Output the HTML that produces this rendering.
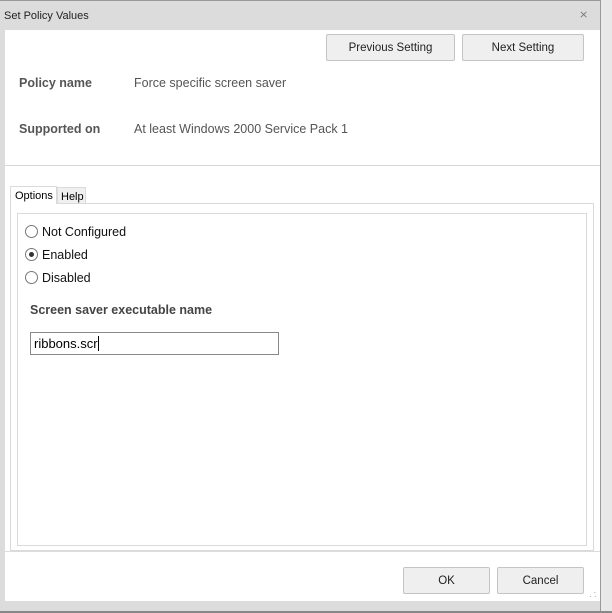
<!DOCTYPE html>
<html><head><style>
*{margin:0;padding:0;box-sizing:border-box}
body{width:612px;height:613px;background:#dcdcdc;font-family:"Liberation Sans",sans-serif;position:relative;overflow:hidden;font-size:12px;color:#000}
.a{position:absolute}
.btn{position:absolute;background:#efefef;border:1px solid #c4c4c4;border-radius:2px;text-align:center;font-size:11.5px;color:#222}
.lbl{font-weight:bold;color:#555;font-size:12.5px}
.val{color:#555;font-size:12.5px}
.rad{position:absolute;width:13px;height:13px;border:1px solid #777;border-radius:50%;background:#fff}
.rt{position:absolute;font-size:12.5px;color:#111}
</style></head><body>
<div class="a" style="left:0;top:0;width:612px;height:1px;background:#999"></div>
<div class="a" style="left:600px;top:0;width:12px;height:613px;background:#e8e8e8;border-left:1px solid #999"></div>
<div class="a" style="left:0;top:611px;width:612px;height:2px;background:#888"></div>
<div class="a" style="left:4px;top:10px;font-size:11px;color:#222">Set Policy Values</div>
<div class="a" style="left:579px;top:8px;font-size:11px;color:#777">⨯</div>
<div class="a" style="left:5px;top:30px;width:595px;height:135px;background:#fff"></div>
<div class="a" style="left:5px;top:165px;width:595px;height:1px;background:#d8d8d8"></div>
<div class="a" style="left:5px;top:166px;width:595px;height:385px;background:#fff"></div>
<div class="a" style="left:5px;top:552px;width:595px;height:49px;background:#fff"></div>
<div class="btn" style="left:326px;top:34px;width:129px;height:27px;line-height:27px">Previous Setting</div>
<div class="btn" style="left:462px;top:34px;width:122px;height:27px;line-height:27px">Next Setting</div>
<div class="a lbl" style="left:19px;top:76px">Policy name</div>
<div class="a val" style="left:134px;top:76px">Force specific screen saver</div>
<div class="a lbl" style="left:19px;top:122px">Supported on</div>
<div class="a val" style="left:134px;top:122px">At least Windows 2000 Service Pack 1</div>
<div class="a" style="left:10px;top:203px;width:584px;height:348px;border:1px solid #dadada"></div>
<div class="a" style="left:10px;top:186px;width:47px;height:18px;background:#fff;border:1px solid #dadada;border-bottom:none;font-size:11px;padding:3px 0 0 4px">Options</div>
<div class="a" style="left:57px;top:187px;width:29px;height:16px;background:#f0f0f0;border:1px solid #dadada;border-bottom:none;font-size:11px;padding:3px 0 0 3px">Help</div>
<div class="a" style="left:17px;top:213px;width:570px;height:333px;border:1px solid #dadada"></div>
<div class="rad" style="left:25px;top:225px"></div><div class="rt" style="left:42px;top:225px">Not Configured</div>
<div class="rad" style="left:25px;top:248px"><div class="a" style="left:3px;top:3px;width:5px;height:5px;border-radius:50%;background:#333"></div></div><div class="rt" style="left:42px;top:248px">Enabled</div>
<div class="rad" style="left:25px;top:271px"></div><div class="rt" style="left:42px;top:271px">Disabled</div>
<div class="a lbl" style="left:30px;top:303px;color:#444">Screen saver executable name</div>
<div class="a" style="left:30px;top:332px;width:249px;height:23px;border:1px solid #888;background:#fff;font-size:13px;padding:3px 0 0 3px">ribbons.scr<span style="display:inline-block;width:1px;height:15px;background:#000;vertical-align:-3px"></span></div>
<div class="btn" style="left:403px;top:567px;width:87px;height:27px;line-height:27px">OK</div>
<div class="btn" style="left:497px;top:567px;width:87px;height:27px;line-height:27px">Cancel</div>
<div class="a" style="left:589px;top:591px;font-size:8px;color:#888;line-height:4px">&nbsp;&nbsp;·<br>·&nbsp;·</div>
</body></html>
